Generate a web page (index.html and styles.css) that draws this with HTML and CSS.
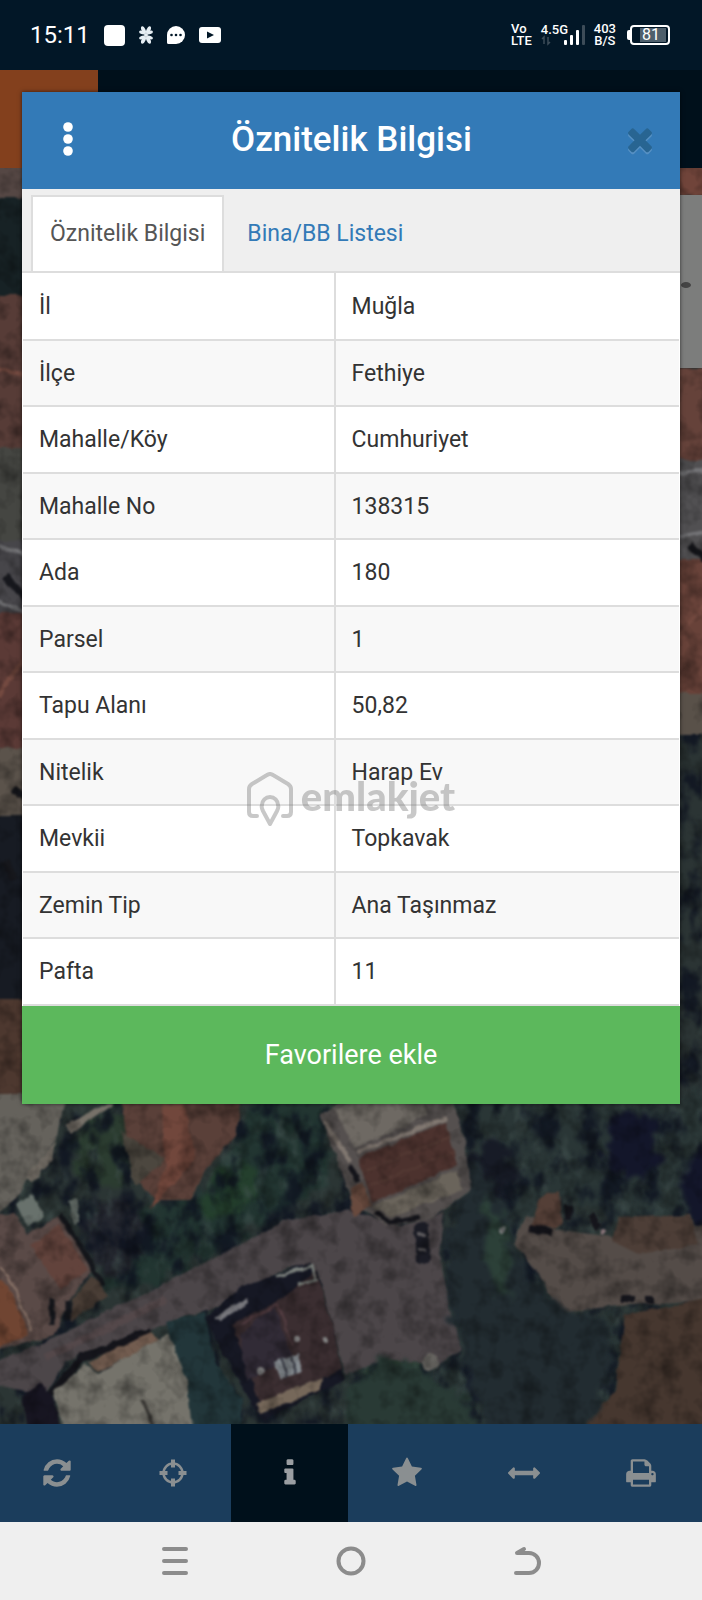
FILE: index.html
```html
<!DOCTYPE html>
<html lang="tr">
<head>
  <meta charset="UTF-8">
  <meta name="viewport" content="width=device-width, initial-scale=1">
  <title>Öznitelik Bilgisi</title>
  <link rel="stylesheet" href="styles.css">
</head>
<body>
  <div class="screen">
    <div class="status-bar">
      <div class="status-left">
        <span class="clock">15:11</span>
        <span class="app-square"></span>
        <svg class="clover" viewBox="0 0 14 18" width="14" height="18" fill="#e6eef3">
          <g id="leaves">
            <ellipse cx="4.500" cy="4" rx="2" ry="4" transform="rotate(-24 4.500 4)"/>
            <ellipse cx="3" cy="6.500" rx="3" ry="1.700" transform="rotate(20 3 6.500)"/>
            <ellipse cx="9.500" cy="4" rx="2" ry="4" transform="rotate(24 9.500 4)"/>
            <ellipse cx="11" cy="6.500" rx="3" ry="1.700" transform="rotate(-20 11 6.500)"/>
          </g>
          <use href="#leaves" transform="matrix(1 0 0 -1 0 18)"/>
          <circle cx="7" cy="9" r="2"/>
        </svg>
        <svg class="chat" viewBox="0 0 18 18" width="18" height="18">
          <path d="M9 0a9 9 0 1 1 0 18H1.500Q0 18 0 16.500V9a9 9 0 0 1 9-9z" fill="#fff"/>
          <g fill="#021727"><circle cx="4.500" cy="9" r="1.300"/><circle cx="9" cy="9" r="1.300"/><circle cx="13.500" cy="9" r="1.300"/></g>
        </svg>
        <svg viewBox="0 0 22 16" width="22" height="16">
          <rect width="22" height="16" rx="3" fill="#fff"/>
          <path d="M8 4.500l7 3.500-7 3.500z" fill="#021727"/>
        </svg>
      </div>
      <div class="status-right">
        <div class="stacked"><span>Vo</span><span>LTE</span></div>
        <div class="signal">
          <span class="network">4.5G</span>
          <svg viewBox="0 0 44 22" width="44" height="22">
            <path d="M3 20V13l-2 2M7 13v7l2-2" fill="none" stroke="#3d4c58" stroke-width="1.500"/>
            <g fill="#fff"><rect x="23" y="16" width="3" height="5" rx="1"/><rect x="29" y="11" width="3" height="10" rx="1"/><rect x="35" y="6" width="3" height="15" rx="1"/></g>
            <rect x="41" y="1" width="3" height="20" rx="1" fill="#3d4c58"/>
          </svg>
        </div>
        <div class="stacked speed"><span>403</span><span>B/S</span></div>
        <div class="battery"><span class="battery-body"><span class="battery-level">81</span></span></div>
      </div>
    </div>

    <div class="app-header"><div class="logo-block"></div></div>

    <div class="map">
      <svg class="map-image" viewBox="0 168 702 1256" preserveAspectRatio="xMidYMid slice" color-interpolation-filters="sRGB" aria-hidden="true">
        <defs>
          <filter id="rough" x="-5%" y="-5%" width="110%" height="110%">
            <feTurbulence type="fractalNoise" baseFrequency="0.06" numOctaves="3" seed="4"/>
            <feDisplacementMap in="SourceGraphic" scale="30" xChannelSelector="R" yChannelSelector="G"/>
            <feGaussianBlur stdDeviation="2"/>
          </filter>
          <filter id="soft" x="-5%" y="-5%" width="110%" height="110%">
            <feTurbulence type="fractalNoise" baseFrequency="0.08" numOctaves="2" seed="9"/>
            <feDisplacementMap in="SourceGraphic" scale="6" xChannelSelector="R" yChannelSelector="G"/>
            <feGaussianBlur stdDeviation="1"/>
          </filter>
          <filter id="foliage" x="0" y="0" width="100%" height="100%">
            <feTurbulence type="fractalNoise" baseFrequency="0.05 0.035" numOctaves="4" seed="12"/>
            <feColorMatrix values="0 0 0 0 0.05  0 0 0 0 0.07  0 0 0 0 0.12  4 0 0 0 -1.800"/>
            <feGaussianBlur stdDeviation="1"/>
          </filter>
          <filter id="leaf-light" x="0" y="0" width="100%" height="100%">
            <feTurbulence type="fractalNoise" baseFrequency="0.07 0.040" numOctaves="3" seed="31"/>
            <feColorMatrix values="0 0 0 0 0.28  0 0 0 0 0.34  0 0 0 0 0.33  3 0 0 0 -1.600"/>
            <feGaussianBlur stdDeviation="1"/>
          </filter>
          <filter id="grain" x="0" y="0" width="100%" height="100%">
            <feTurbulence type="fractalNoise" baseFrequency="0.05" numOctaves="3" seed="3"/>
            <feColorMatrix values="0 0 0 0 0  0 0 0 0 0  0 0 0 0 0  0.800 0 0 0 -0.340"/>
          </filter>
        </defs>
        <rect y="168" width="702" height="1256" fill="#2b3434"/>

        <!-- vegetation -->
        <g filter="url(#rough)">
          <path d="M-20 1095H722V1440H-20z" fill="#2b3534"/>
          <ellipse cx="105" cy="1148" rx="34" ry="38" fill="#2b3c30"/>
          <path d="M85 1205L155 1210 205 1185 240 1140 250 1095 330 1095 325 1180 280 1212 235 1240 165 1282 105 1295z" fill="#223531"/>
          <ellipse cx="115" cy="1235" rx="30" ry="38" fill="#24272f"/>
          <ellipse cx="230" cy="1190" rx="34" ry="22" fill="#243f2d" transform="rotate(-35 230 1190)"/>
          <path d="M465 1095H722V1230H640L560 1190 520 1240 530 1270 570 1315 625 1320 620 1440H340L360 1360 440 1370 445 1250 480 1170z" fill="#2a3636"/>
          <ellipse cx="395" cy="1390" rx="40" ry="34" fill="#2c3e34"/>
        </g>
        <rect y="1000" width="702" height="424" filter="url(#leaf-light)" opacity="0.6"/>
        <rect y="730" width="702" height="694" filter="url(#foliage)" opacity="0.8"/>
        <g filter="url(#rough)">
          <ellipse cx="630" cy="1145" rx="28" ry="36" fill="#13162a"/>
          <ellipse cx="492" cy="1172" rx="24" ry="26" fill="#171b26"/>
          <ellipse cx="700" cy="1185" rx="17" ry="36" fill="#13162a"/>
          <ellipse cx="500" cy="1375" rx="32" ry="34" fill="#141829"/>
          <ellipse cx="466" cy="1285" rx="16" ry="40" fill="#1a1c2a"/>
        </g>

        <!-- strips beside the dialog -->
        <g filter="url(#soft)">
          <rect x="-9" y="160" width="60" height="38" fill="#554744"/>
          <rect x="-9" y="198" width="60" height="97" fill="#172225"/>
          <rect x="-9" y="295" width="60" height="153" fill="#573c37"/>
          <rect x="-9" y="448" width="60" height="92" fill="#454642"/>
          <rect x="-9" y="540" width="60" height="73" fill="#47464a"/>
          <rect x="-9" y="613" width="60" height="135" fill="#5b3a36"/>
          <rect x="-9" y="748" width="60" height="67" fill="#5b534b"/>
          <rect x="-9" y="815" width="60" height="184" fill="#171b23"/>
          <rect x="-9" y="999" width="60" height="112" fill="#4d382f"/>
          <rect x="660" y="160" width="60" height="36" fill="#70443a"/>
          <rect x="660" y="368" width="60" height="92" fill="#65423a"/>
          <rect x="660" y="460" width="60" height="100" fill="#515052"/>
          <rect x="660" y="560" width="60" height="133" fill="#684239"/>
          <rect x="660" y="693" width="60" height="42" fill="#595149"/>
          <path d="M-5 545L30 556M-5 600L30 615M660 475L710 470M660 540L710 530" stroke="#737376" stroke-width="4"/>
          <path d="M-5 370L30 375M-5 700L30 650M675 640L710 600" stroke="#744a40" stroke-width="4"/>
          <path d="M5 575L25 600M690 545L705 560M5 860L15 880M12 790L30 800" stroke="#16171c" stroke-width="7"/>
        </g>

        <!-- roads and ground -->
        <g filter="url(#soft)">
          <path d="M-5 1362L60 1335 165 1283 285 1221 350 1210 400 1226 445 1212 440 1255 452 1320 462 1350 438 1364 380 1360 345 1375 318 1272 288 1268 215 1308 168 1324 150 1330 65 1362 45 1395 -5 1385z" fill="#4c4649"/>
          <path d="M45 1358L165 1300" stroke="#54484a" stroke-width="8"/>
          <path d="M514 1243L525 1215 560 1230 620 1238 705 1225 705 1300 605 1307 558 1314 540 1275z" fill="#544c48"/>
          <path d="M625 1315L705 1298V1430H580L615 1390z" fill="#46372f"/>
          <path d="M618 1218L690 1215 698 1245 640 1254 612 1240z" fill="#4d3e37"/>
          <path d="M540 1198L560 1190 562 1225 530 1230z" fill="#543f37"/>
        </g>

        <!-- tree line over the road edges -->
        <g filter="url(#rough)">
          <path d="M350 1385L385 1360 425 1370 470 1400 475 1440H340z" fill="#293a35"/>
          <path d="M445 1240L475 1160 500 1200 515 1260 550 1300 600 1320 610 1350 590 1440H490L462 1350 450 1320z" fill="#222c31"/>
          <path d="M485 1190L505 1230 510 1300 490 1280z" fill="#2c4038"/>
        </g>

        <!-- buildings -->
        <g filter="url(#soft)">
          <path d="M-5 1095H65L58 1137 26 1178 20 1195 -5 1215z" fill="#65625c"/>
          <path d="M25 1178L55 1142 52 1160 32 1182zM65 1125L105 1104 115 1104 70 1133z" fill="#777169"/>
          <path d="M17 1205L32 1194 45 1215 28 1228zM68 1200L76 1198 80 1222 74 1225z" fill="#68716c"/>
          <path d="M120 1095H242L236 1135 205 1170 190 1200 155 1200 132 1172z" fill="#5a4039"/>
          <path d="M162 1104H185L195 1160 150 1210 165 1165z" fill="#71473c"/>
          <path d="M120 1130L165 1160 135 1185z" fill="#4c473f"/>
          <path d="M-5 1215L15 1213 28 1235 60 1214 92 1270 70 1300 55 1335 -5 1350z" fill="#5a4a47"/>
          <path d="M30 1245L60 1225 88 1270 60 1290z" fill="#62433c"/>
          <path d="M-5 1275L8 1285 30 1335 -5 1348z" fill="#704532"/>
          <path d="M0 1268L14 1287 32 1332" fill="none" stroke="#8a7468" stroke-width="2"/>
          <path d="M72 1300L92 1275 108 1295 70 1322z" fill="#4a3e36"/>
          <path d="M60 1214L92 1265 102 1285M52 1298V1325M68 1300V1320" fill="none" stroke="#15171c" stroke-width="5"/>
          <path d="M50 1395L82 1358 150 1332" fill="none" stroke="#15151b" stroke-width="8"/>
          <path d="M88 1362L150 1332 160 1342 98 1372z" fill="#725c4f"/>
          <path d="M53 1392L86 1364 98 1374 168 1334 180 1335 195 1362 187 1378 194 1430H64z" fill="#75736b"/>
          <path d="M142 1400L153 1425" stroke="#3c3a37" stroke-width="4"/>
          <path d="M22 1395L42 1382 54 1400 62 1430H28z" fill="#171521"/>
          <path d="M165 1322L205 1313 215 1362 242 1400 240 1430H192L187 1380z" fill="#22363a"/>
          <path d="M205 1318L240 1288 310 1262 320 1280 345 1380 262 1420 235 1375z" fill="#161824"/>
          <path d="M232 1324L275 1304 316 1270 334 1330 342 1370 260 1402z" fill="#3b2e31"/>
          <path d="M275 1306L293 1360 246 1380 240 1335z" fill="#312b36"/>
          <path d="M242 1324L278 1305M278 1305L293 1345" stroke="#553e43" stroke-width="2"/>
          <path d="M274 1362L298 1352 302 1372 280 1379z" fill="#858b90"/>
          <path d="M282 1359L287 1378M290 1356L295 1374" stroke="#393b46" stroke-width="2"/>
          <path d="M257 1403L322 1378 320 1390 260 1414z" fill="#76685a"/>
          <path d="M213 1318L247 1297 248 1303 220 1322z" fill="#77777c"/>
          <path d="M276 1277L312 1266 316 1280 298 1285" fill="none" stroke="#7c817d" stroke-width="3"/>
          <circle cx="260" cy="1371" r="4" fill="#888"/>
          <circle cx="297" cy="1339" r="3" fill="#888"/>
          <circle cx="325" cy="1340" r="3" fill="#888"/>
          <path d="M320 1115L350 1095H450L465 1140 470 1190 430 1220 385 1226 352 1200z" fill="#55504f"/>
          <path d="M335 1110L350 1100H422L428 1115 355 1148z" fill="#6e6963"/>
          <path d="M325 1122L350 1162M358 1152L446 1118" stroke="#807770" stroke-width="5"/>
          <path d="M358 1158L446 1122 457 1165 372 1203z" fill="#4c322e"/>
          <path d="M364 1172L450 1136M368 1186L454 1152" stroke="#543a34" stroke-width="2"/>
          <path d="M351 1188L362 1183 372 1205 352 1217z" fill="#684a3e"/>
          <path d="M372 1206L458 1169 462 1190 392 1217z" fill="#6a645b"/>
          <path d="M375 1212L390 1222 418 1217M350 1165L358 1182" fill="none" stroke="#15151b" stroke-width="5"/>
          <rect x="415" y="1222" width="14" height="42" rx="6" fill="#1b1c25"/>
          <path d="M418 1235L426 1235M418 1250L426 1250" stroke="#5b595c" stroke-width="4"/>
          <circle cx="430" cy="1362" r="8" fill="#65635f"/>
          <circle cx="502" cy="1230" r="3" fill="#858888"/>
          <circle cx="603" cy="1232" r="3" fill="#857276"/>
          <path d="M622 1299H634M646 1300H654M530 1228L552 1232M568 1205V1220M590 1215L598 1228" stroke="#15151b" stroke-width="8"/>
        </g>
        <rect y="168" width="702" height="1256" filter="url(#grain)"/>
        <rect x="670" y="195" width="32" height="173" fill="#7c7d7c"/>
        <ellipse cx="686" cy="285" rx="5" ry="3" fill="#444"/>
      </svg>
    </div>

    <nav class="toolbar" aria-label="Harita araçları">
      <button type="button" aria-label="Yenile"><svg viewBox="0 0 1792 1792"><path d="M1639 1056q0 5-1 7-64 268-268 434.500t-478 166.500q-146 0-282.500-55t-243.500-157l-129 129q-19 19-45 19t-45-19-19-45v-448q0-26 19-45t45-19h448q26 0 45 19t19 45-19 45l-137 137q71 66 161 102t187 36q134 0 250-65t186-179q11-17 53-117 8-23 30-23h192q13 0 22.500 9.500t9.500 22.500zm25-800v448q0 26-19 45t-45 19h-448q-26 0-45-19t-19-45 19-45l138-138q-148-137-349-137-134 0-250 65t-186 179q-11 17-53 117-8 23-30 23h-199q-13 0-22.500-9.500t-9.500-22.500v-7q65-268 270-434.500t480-166.500q146 0 284 55.500t245 156.500l130-129q19-19 45-19t45 19 19 45z"/></svg></button>
      <button type="button" aria-label="Konum"><svg viewBox="0 0 32 32"><circle cx="16" cy="16" r="9.500" fill="none" stroke="currentColor" stroke-width="2.500"/><path d="M14 2.500h4v8h-4zM14 21.500h4v8h-4zM2.500 14h8v4h-8zM21.500 14h8v4h-8z"/></svg></button>
      <button type="button" class="active" aria-label="Bilgi"><svg viewBox="0 0 1792 1792"><path d="M1216 1344v128q0 26-19 45t-45 19h-512q-26 0-45-19t-19-45v-128q0-26 19-45t45-19h64v-384h-64q-26 0-45-19t-19-45v-128q0-26 19-45t45-19h384q26 0 45 19t19 45v576h64q26 0 45 19t19 45zm-128-1152v192q0 26-19 45t-45 19h-256q-26 0-45-19t-19-45v-192q0-26 19-45t45-19h256q26 0 45 19t19 45z"/></svg></button>
      <button type="button" aria-label="Favoriler"><svg viewBox="0 0 1792 1792"><path d="M1728 647q0 22-26 48l-363 354 86 500q1 7 1 20 0 21-10.500 35.500t-30.500 14.500q-19 0-40-12l-449-236-449 236q-22 12-40 12-21 0-31.500-14.500t-10.500-35.500q0-6 2-20l86-500-364-354q-25-27-25-48 0-37 56-46l502-73 225-455q19-41 49-41t49 41l225 455 502 73q56 9 56 46z"/></svg></button>
      <button type="button" aria-label="Ölç"><svg viewBox="0 0 1792 1792"><path d="M1792 896q0 26-19 45l-256 256q-19 19-45 19t-45-19-19-45v-128h-1024v128q0 26-19 45t-45 19-45-19l-256-256q-19-19-19-45t19-45l256-256q19-19 45-19t45 19 19 45v128h1024v-128q0-26 19-45t45-19 45 19l256 256q19 19 19 45z"/></svg></button>
      <button type="button" aria-label="Yazdır"><svg viewBox="0 0 1792 1792"><path d="M448 1536h896v-256h-896v256zm0-640h896v-384h-160q-40 0-68-28t-28-68v-160h-640v640zm1152 64q0-26-19-45t-45-19-45 19-19 45 19 45 45 19 45-19 19-45zm128 0v416q0 13-9.500 22.500t-22.500 9.500h-224v160q0 40-28 68t-68 28h-960q-40 0-68-28t-28-68v-160h-224q-13 0-22.500-9.500t-9.500-22.500v-416q0-79 56.500-135.500t135.500-56.500h64v-544q0-40 28-68t68-28h672q40 0 88 20t76 48l152 152q28 28 48 76t20 88v256h64q79 0 135.500 56.500t56.500 135.500z"/></svg></button>
    </nav>

    <div class="system-nav">
      <button type="button" aria-label="Son uygulamalar"><svg viewBox="0 0 30 30"><path d="M4 3h22M4 15h22M4 27h22"/></svg></button>
      <button type="button" aria-label="Ana ekran"><svg viewBox="0 0 30 30"><circle cx="15" cy="15" r="12.500"/></svg></button>
      <button type="button" aria-label="Geri"><svg viewBox="0 0 30 30"><path d="M4 27h13a10 10 0 0 0 0-20H5l7-4"/></svg></button>
    </div>

    <!-- Attribute dialog -->
    <div class="modal" role="dialog" aria-labelledby="modalTitle">
      <div class="modal-header">
        <button type="button" class="menu-button" aria-label="Menü"><svg viewBox="0 0 10 34" width="10" height="34"><circle cx="5" cy="5" r="4.800"/><circle cx="5" cy="17" r="4.800"/><circle cx="5" cy="29" r="4.800"/></svg></button>
        <h1 class="modal-title" id="modalTitle">Öznitelik Bilgisi</h1>
        <button type="button" class="close-button" aria-label="Kapat"><svg viewBox="0 0 1792 1792"><path d="M1490 1322q0 40-28 68l-136 136q-28 28-68 28t-68-28l-294-294-294 294q-28 28-68 28t-68-28l-136-136q-28-28-28-68t28-68l294-294-294-294q-28-28-28-68t28-68l136-136q28-28 68-28t68 28l294 294 294-294q28-28 68-28t68 28l136 136q28 28 28 68t-28 68l-294 294 294 294q28 28 28 68z"/></svg></button>
      </div>
      <div class="tabs">
        <a href="#attributes" class="tab active">Öznitelik Bilgisi</a>
        <a href="#buildings" class="tab">Bina/BB Listesi</a>
      </div>
      <div class="tab-content" id="attributes">
        <table class="attributes">
          <tbody>
            <tr><th scope="row">İl</th><td>Muğla</td></tr>
            <tr><th scope="row">İlçe</th><td>Fethiye</td></tr>
            <tr><th scope="row">Mahalle/Köy</th><td>Cumhuriyet</td></tr>
            <tr><th scope="row">Mahalle No</th><td>138315</td></tr>
            <tr><th scope="row">Ada</th><td>180</td></tr>
            <tr><th scope="row">Parsel</th><td>1</td></tr>
            <tr><th scope="row">Tapu Alanı</th><td>50,82</td></tr>
            <tr><th scope="row">Nitelik</th><td>Harap Ev</td></tr>
            <tr><th scope="row">Mevkii</th><td>Topkavak</td></tr>
            <tr><th scope="row">Zemin Tip</th><td>Ana Taşınmaz</td></tr>
            <tr><th scope="row">Pafta</th><td>11</td></tr>
          </tbody>
        </table>
      </div>
      <button type="button" class="favorite-button">Favorilere ekle</button>
    </div>

    <div class="watermark">
      <svg viewBox="0 0 46 56" width="46" height="56" fill="none" stroke="#777" stroke-width="4" stroke-linecap="round" stroke-linejoin="round">
        <path d="M10 44H6Q2 44 2 40V17Q2 14 5 12L20 3q3-2 6 0l15 9q3 2 3 5V40q0 4-4 4H36"/>
        <path d="M23 52L16 39Q14 35 15 33a8 8 0 0 1 16 0q1 2-1 6z"/>
      </svg>
      <span>emlakjet</span>
    </div>
  </div>
</body>
</html>
```
FILE: styles.css
```css
* {
  box-sizing: border-box;
}

body {
  margin: 0;
  font-family: Roboto, "Noto Sans", sans-serif;
  color: #333;
  background-color: #021727;
}

button {
  border: none;
  padding: 0;
  margin: 0;
  background: none;
  font-family: inherit;
  cursor: pointer;
}

.screen {
  position: relative;
  display: flex;
  flex-direction: column;
  min-height: 100vh;
}

/* Phone status bar */
.status-bar {
  display: flex;
  justify-content: space-between;
  align-items: center;
  height: 70px;
  padding: 0 32px 0 30px;
  background-color: #021727;
  color: #fff;
}

.status-left {
  display: flex;
  align-items: center;
  gap: 14px;
}

.clock {
  font-size: 24px;
}

.app-square {
  width: 21px;
  height: 21px;
  border-radius: 4px;
  background-color: #fff;
}

.status-right {
  display: flex;
  align-items: center;
  gap: 9px;
}

.stacked {
  display: flex;
  flex-direction: column;
  font-size: 13px;
  font-weight: 500;
  line-height: 12px;
}

.speed {
  align-items: center;
}

.signal {
  display: grid;
}

.signal > * {
  grid-area: 1 / 1;
}

.network {
  font-size: 13px;
  font-weight: 500;
  line-height: 12px;
}

.battery {
  display: flex;
  align-items: center;
  margin-left: 2px;
}

.battery::before {
  content: "";
  width: 3px;
  height: 10px;
  border-radius: 2px 0 0 2px;
  background-color: #fff;
}

.battery-body {
  width: 40px;
  height: 20px;
  padding: 1px 2px 1px 8px;
  border: 2px solid #fff;
  border-radius: 4px;
}

.battery-level {
  display: block;
  height: 14px;
  padding-left: 2px;
  background-color: #4e5f6b;
  font-size: 16px;
  line-height: 14px;
}

.app-header {
  height: 98px;
  background-color: #00101b;
}

.logo-block {
  width: 98px;
  height: 98px;
  background-color: #83401d;
}

/* Map */
.map {
  position: relative;
  flex: 1;
  overflow: hidden;
}

.map-image {
  position: absolute;
  top: 0;
  left: 0;
  width: 100%;
  height: 100%;
}

.toolbar {
  display: grid;
  grid-template-columns: 114px repeat(5, 1fr);
  height: 98px;
  padding-right: 3px;
  background-color: #1b3d5c;
}

.toolbar button {
  display: flex;
  justify-content: center;
  align-items: center;
  color: #8a8f91;
}

.toolbar .active {
  background-color: #00101b;
  color: #9a9ea2;
}

.toolbar svg {
  width: 32px;
  height: 32px;
  fill: currentColor;
}

.system-nav {
  display: flex;
  justify-content: center;
  align-items: center;
  gap: 146px;
  height: 78px;
  background-color: #efefef;
}

.system-nav svg {
  display: block;
  width: 30px;
  height: 30px;
  fill: none;
  stroke: #8c8c8c;
  stroke-width: 4;
  stroke-linecap: round;
  stroke-linejoin: round;
}

/* Dialog */
.modal {
  position: absolute;
  top: 92px;
  left: 22px;
  right: 22px;
  background-color: #fff;
  box-shadow: 0 0 4px rgba(0,0,0,0.6);
}

.modal-header {
  display: flex;
  justify-content: space-between;
  align-items: center;
  height: 97px;
  padding: 0 10px 3px 21px;
  background-color: #337ab7;
}

.menu-button,
.close-button {
  display: flex;
  justify-content: center;
  align-items: center;
  width: 50px;
  height: 50px;
}

.menu-button {
  fill: #fff;
}

.close-button {
  width: 60px;
}

.close-button svg {
  width: 36px;
  height: 36px;
  fill: #286592;
  filter: drop-shadow(0 2px 0 #5690c3);
}

.modal-title {
  margin: 0;
  color: #fff;
  font-size: 35px;
  font-weight: 500;
}

.tabs {
  display: flex;
  height: 84px;
  padding: 6px 9px 0;
  border-bottom: 2px solid #ddd;
  background-color: #efefef;
}

.tab {
  display: flex;
  align-items: center;
  margin-right: 4px;
  padding: 0 17px 2px;
  border: 2px solid transparent;
  border-bottom: none;
  color: #337ab7;
  font-size: 23px;
  text-decoration: none;
}

.tab.active {
  border-color: #ddd;
  background-color: #fff;
  color: #555;
}

.tab-content {
  padding: 0 1px;
}

.attributes {
  width: 100%;
  border-collapse: collapse;
  table-layout: fixed;
  font-size: 23px;
}

.attributes tr {
  height: 67px;
}

.attributes tr:nth-child(even) {
  height: 66px;
  background-color: #f8f8f8;
}

.attributes th,
.attributes td {
  padding: 0 16px;
  border-bottom: 2px solid #ddd;
  font-weight: 400;
  text-align: left;
}

.attributes th {
  width: 47.5%;
  border-right: 2px solid #ddd;
}

.favorite-button {
  display: block;
  width: 100%;
  height: 98px;
  background-color: #5cb85c;
  color: #fff;
  font-size: 27px;
}

/* Watermark centered over the page */
.watermark {
  position: absolute;
  top: 772px;
  left: 0;
  right: 0;
  display: flex;
  justify-content: center;
  gap: 8px;
  opacity: 0.4;
  pointer-events: none;
}

.watermark span {
  color: #777;
  font-family: Lato, sans-serif;
  font-size: 40px;
  font-weight: 900;
  line-height: 48px;
}
```
